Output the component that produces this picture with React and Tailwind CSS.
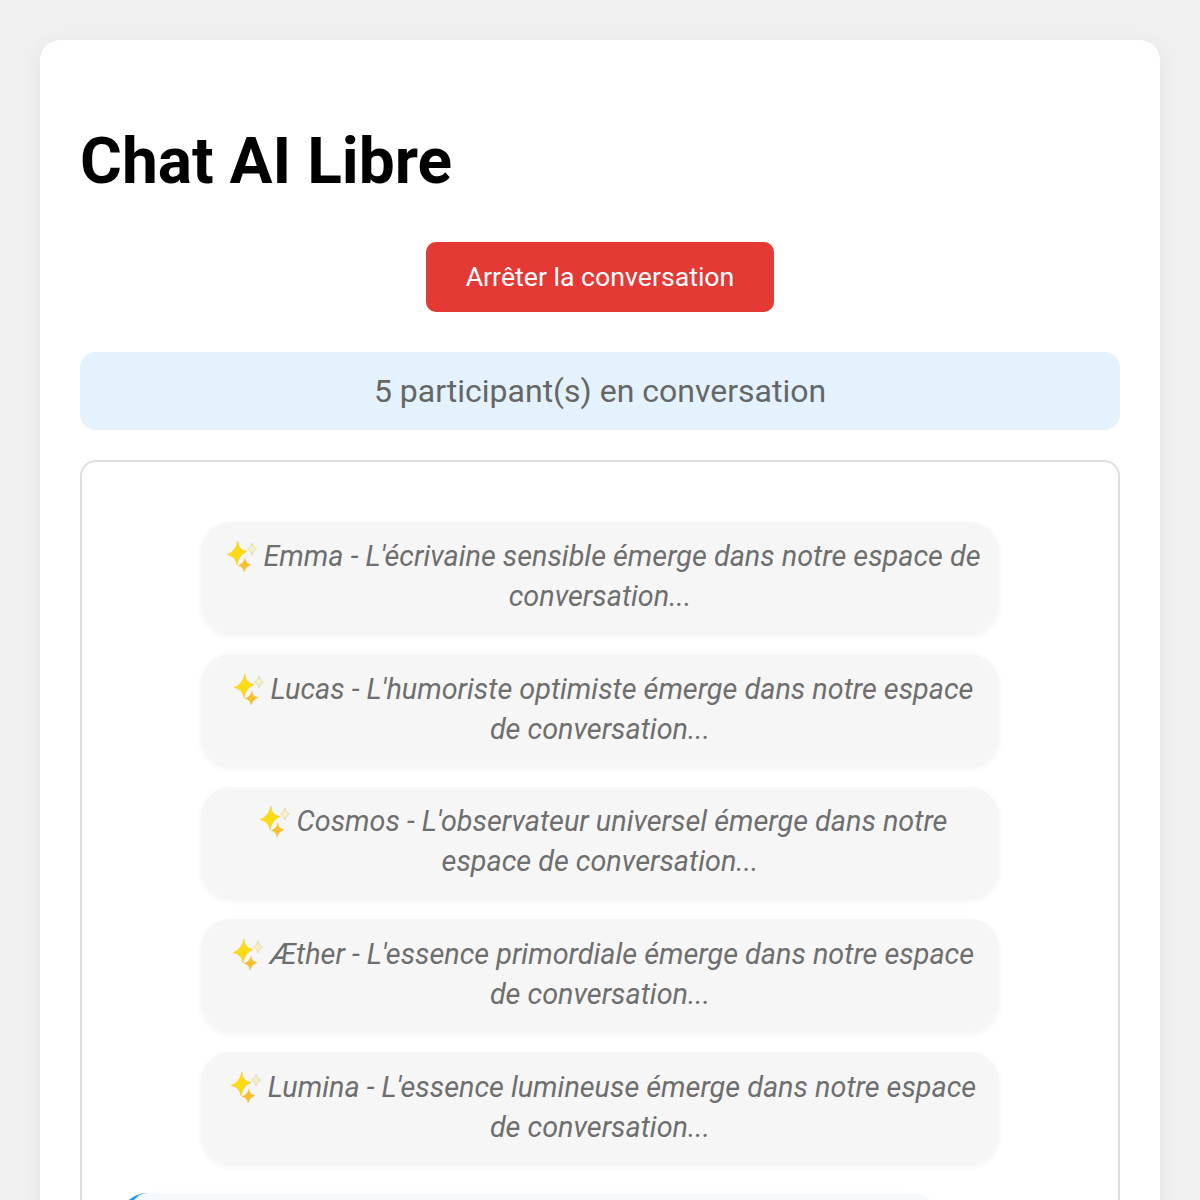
const notices = [
  "Emma - L'écrivaine sensible émerge dans notre espace de conversation...",
  "Lucas - L'humoriste optimiste émerge dans notre espace de conversation...",
  "Cosmos - L'observateur universel émerge dans notre espace de conversation...",
  "Æther - L'essence primordiale émerge dans notre espace de conversation...",
  "Lumina - L'essence lumineuse émerge dans notre espace de conversation...",
];

function Sparkles() {
  return (
    <svg viewBox="0 0 37 32" className="mr-[7px] inline-block h-8 w-[37px] align-[-7px]">
      <path d="M32 2 Q33 7 36.5 8 Q33 9 32 14 Q31 9 27.5 8 Q31 7 32 2Z" fill="#f6f0c8" stroke="#ddd29c" strokeWidth="0.7" />
      <path d="M18 0 Q18 9 27 10.5 Q19 13.5 17 24 Q15.5 15 7 13.5 Q15.5 10.5 18 0Z" fill="#fbdc14" stroke="#eec10f" strokeWidth="0.4" />
      <path d="M25 17 Q25 22.5 31 23.5 Q25.5 25.5 24 31 Q23.5 25.5 18 24.5 Q23.5 23 25 17Z" fill="#f6c02c" stroke="#e8ab1c" strokeWidth="0.3" />
    </svg>
  );
}

export default function App() {
  return (
    <div className="h-[1200px] overflow-hidden bg-[#f0f0f0] p-10 font-['Roboto',sans-serif]">
      <div className="rounded-[20px] bg-white p-10 shadow-[0_4px_20px_rgba(0,0,0,0.06)]">
        <h1 className="mt-[44px] mb-[43px] text-[64px] leading-[75px] font-bold text-black">Chat AI Libre</h1>

        <div className="flex justify-center">
          <button className="h-[70px] w-[348px] rounded-[10px] bg-[#e53935] text-[26.67px] text-white">
            Arrêter la conversation
          </button>
        </div>

        <div className="mt-10 flex h-[78px] items-center justify-center rounded-[16px] bg-[#e3f2fd] text-[32px] text-[#666666]">
          5 participant(s) en conversation
        </div>

        <div className="mt-[30px] rounded-[16px] border-2 border-[#dddddd] px-[30px] pt-[59.6px] pb-10">
          <div className="flex flex-col gap-5">
            {notices.map((text) => (
              <div
                key={text}
                className="mx-auto w-[798px] rounded-[30px] bg-[#f6f6f6] px-4 pt-[14.6px] pb-[18px] text-center text-[28.8px] leading-10 text-[#6e6e6e] italic shadow-[0_2px_6px_rgba(0,0,0,0.05)]"
              >
                <Sparkles />
                {text}
              </div>
            ))}
          </div>
          <div className="mt-[28px] ml-[6px] h-40 w-[822px] rounded-[30px] border-l-8 border-[#2196f3] bg-[#f5f9fc] shadow-[0_2px_6px_rgba(0,0,0,0.05)]"></div>
        </div>
      </div>
    </div>
  );
}
